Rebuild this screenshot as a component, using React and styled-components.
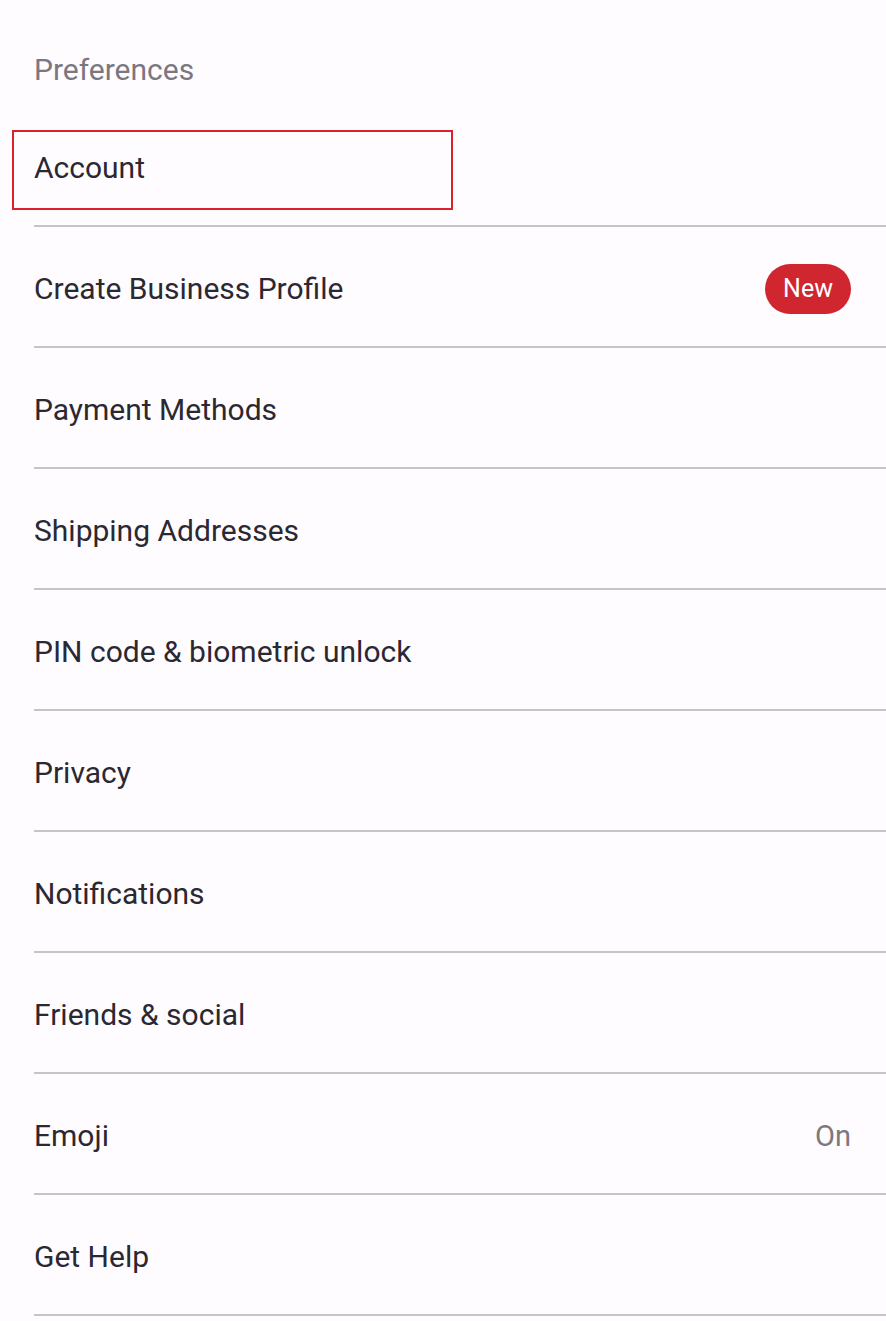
import styled, { createGlobalStyle } from "styled-components";

const GlobalStyle = createGlobalStyle`
  html, body {
    margin: 0;
    padding: 0;
    background: #fefcfe;
  }

  body {
    font-family: Roboto, "Noto Sans", sans-serif;
    -webkit-font-smoothing: antialiased;
  }
`;

const Page = styled.div`
  width: 886px;
  min-height: 1321px;
  background: #fefcfe;
`;

const SectionTitle = styled.div`
  height: 106px;
  padding: 52px 0 0 34px;
  box-sizing: border-box;
  font-size: 30px;
  line-height: 36px;
  color: #7b7782;
`;

const List = styled.ul`
  list-style: none;
  margin: 0;
  padding: 0;
`;

const Row = styled.li`
  position: relative;
  height: 121px;
  margin-left: 34px;
  padding: 4px 35px 0 0;
  box-sizing: border-box;
  display: flex;
  align-items: center;
  justify-content: space-between;
  border-bottom: 2px solid #c6c4c8;
`;

const Label = styled.span`
  font-size: 30px;
  color: #2b2832;
`;

const Value = styled.span`
  font-size: 29px;
  color: #7b7880;
`;

const Badge = styled.span`
  display: inline-flex;
  align-items: center;
  justify-content: center;
  width: 86px;
  height: 50px;
  border-radius: 25px;
  background: #d0262f;
  color: #ffffff;
  font-size: 25px;
`;

const Highlight = styled.div`
  position: absolute;
  left: -22px;
  top: 24px;
  width: 441px;
  height: 80px;
  box-sizing: border-box;
  border: 2px solid #d9222e;
  pointer-events: none;
`;

const items = [
  { label: "Account", highlight: true },
  { label: "Create Business Profile", badge: "New" },
  { label: "Payment Methods" },
  { label: "Shipping Addresses" },
  { label: "PIN code & biometric unlock" },
  { label: "Privacy" },
  { label: "Notifications" },
  { label: "Friends & social" },
  { label: "Emoji", value: "On" },
  { label: "Get Help" },
];

export default function App() {
  return (
    <>
      <GlobalStyle />
      <Page>
        <SectionTitle>Preferences</SectionTitle>
        <List>
          {items.map((item) => (
            <Row key={item.label}>
              {item.highlight && <Highlight />}
              <Label>{item.label}</Label>
              {item.badge && <Badge>{item.badge}</Badge>}
              {item.value && <Value>{item.value}</Value>}
            </Row>
          ))}
        </List>
      </Page>
    </>
  );
}
